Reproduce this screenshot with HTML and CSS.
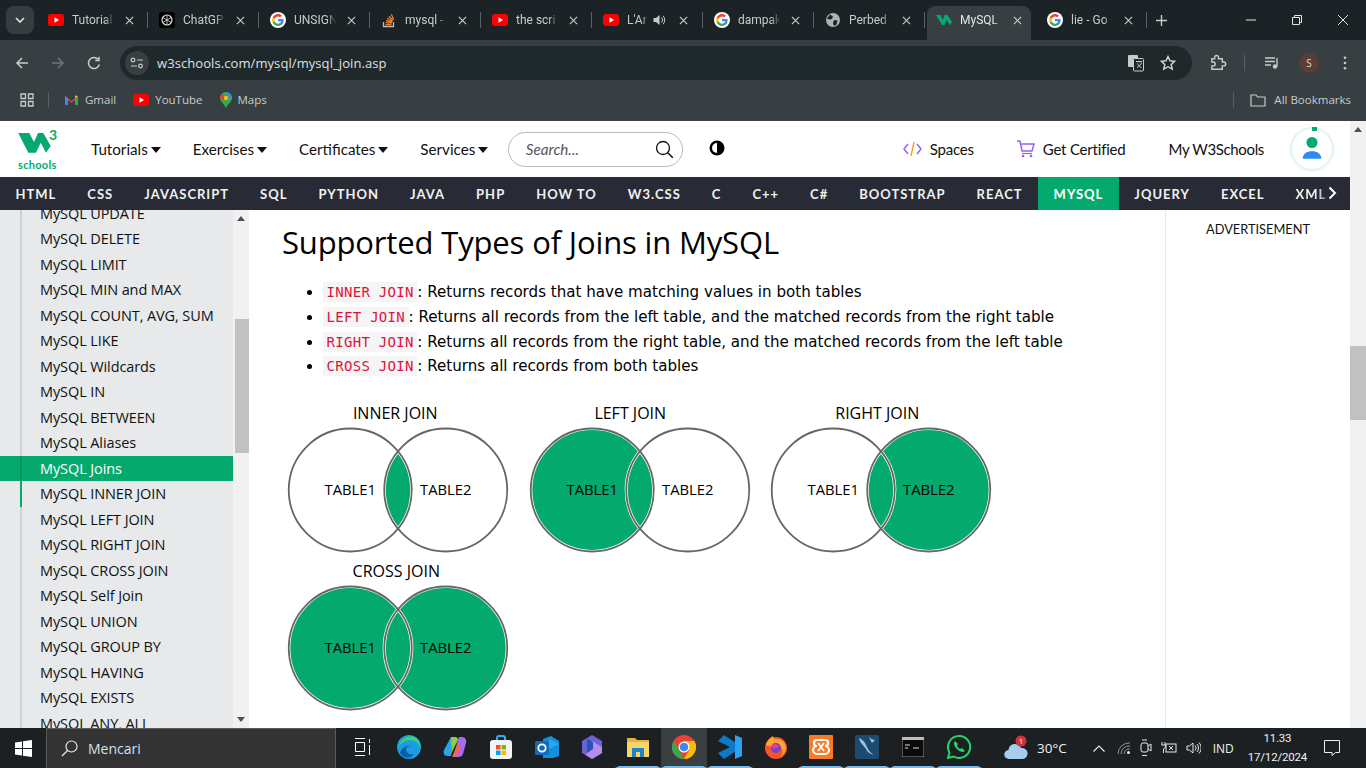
FILE: index.html
```html
<!DOCTYPE html>
<html>
  <head>
    <meta charset="UTF-8" />
    <meta name="viewport" content="width=device-width, initial-scale=1.0" />
    <title>MySQL Joins</title>
    <link rel="stylesheet" href="styles.css">
  </head>
  <body>
    <svg class="defs" aria-hidden="true">
      <symbol id="i-g" viewBox="0 0 16 16">
        <circle cx="8" cy="8" r="8" fill="#fff"/>
        <path d="M13.600 8.200c0-.4 0-.8-.1-1.200H8v2.300h3.200c-.1.800-.6 1.400-1.200 1.800v1.500h1.900c1.100-1 1.700-2.500 1.700-4.400z" fill="#4285f4"/>
        <path d="M8 14c1.600 0 2.900-.5 3.900-1.400L10 11.100c-.5.400-1.200.6-2 .6-1.500 0-2.800-1-3.300-2.400H2.800v1.500C3.800 12.700 5.700 14 8 14z" fill="#34a853"/>
        <path d="M4.700 9.300c-.3-.8-.3-1.800 0-2.600V5.200H2.800c-.8 1.700-.8 3.900 0 5.600z" fill="#fbbc05"/>
        <path d="M8 4.400c.9 0 1.600.3 2.200.9l1.700-1.700C10.900 2.600 9.500 2 8 2 5.700 2 3.800 3.300 2.800 5.200l1.900 1.500C5.200 5.400 6.500 4.400 8 4.400z" fill="#ea4335"/>
      </symbol>
      <symbol id="i-yt" viewBox="0 0 16 16">
        <rect y="2" width="16" height="12" rx="3" fill="#f00"/>
        <path d="M6.500 5.300v5.400L11 8z" fill="#fff"/>
      </symbol>
      <symbol id="i-x" viewBox="0 0 10 10">
        <path d="M1 1l8 8M9 1l-8 8" stroke="#c7cbcd" stroke-width="1.300" fill="none"/>
      </symbol>
    </svg>

    <div class="tabstrip">
      <button class="tab-menu">
        <svg width="10" height="6" viewBox="0 0 10 6"><path d="M1 1l4 4 4-4" stroke="#e3e5e6" stroke-width="1.600" fill="none"/></svg>
      </button>
      <div class="tab"><svg class="fav"><use href="#i-yt"/></svg><span class="tab-name">Tutorial</span><svg class="tab-x"><use href="#i-x"/></svg></div>
      <div class="tab">
        <svg class="fav" viewBox="0 0 16 16"><rect width="16" height="16" rx="3" fill="#000"/><circle cx="8" cy="8" r="5" fill="none" stroke="#ddd" stroke-width="1.200"/><path d="M8 3v10M3.700 5.500l8.600 5M12.300 5.500l-8.600 5" stroke="#ddd" stroke-width=".8"/></svg>
        <span class="tab-name">ChatGP</span><svg class="tab-x"><use href="#i-x"/></svg>
      </div>
      <div class="tab"><svg class="fav"><use href="#i-g"/></svg><span class="tab-name">UNSIGN</span><svg class="tab-x"><use href="#i-x"/></svg></div>
      <div class="tab">
        <svg class="fav" viewBox="0 0 16 16"><path d="M2.500 10v4.500h10V10" fill="none" stroke="#bcbbbb" stroke-width="1.300"/><path d="M4.500 12.700h6M4.700 10.600l6 .6M5.200 8.500l5.800 1.600M6.200 6.300l5.200 3M8 4.200l3.800 4.300M10.300 2.300l2.400 5.300" stroke="#f48024" stroke-width="1.300" fill="none"/></svg>
        <span class="tab-name">mysql -</span><svg class="tab-x"><use href="#i-x"/></svg>
      </div>
      <div class="tab"><svg class="fav"><use href="#i-yt"/></svg><span class="tab-name">the scri</span><svg class="tab-x"><use href="#i-x"/></svg></div>
      <div class="tab">
        <svg class="fav"><use href="#i-yt"/></svg><span class="tab-name tab-name-short">L'Ar</span>
        <svg class="tab-sound" viewBox="0 0 14 14"><path d="M1.500 5h2.500l3.500-3v10L4 9H1.500z" fill="#c7cbcd"/><path d="M9.500 4.500a3.500 3.500 0 0 1 0 5M11 2.800a6 6 0 0 1 0 8.400" stroke="#c7cbcd" fill="none"/></svg>
        <svg class="tab-x"><use href="#i-x"/></svg>
      </div>
      <div class="tab"><svg class="fav"><use href="#i-g"/></svg><span class="tab-name">dampak</span><svg class="tab-x"><use href="#i-x"/></svg></div>
      <div class="tab">
        <svg class="fav" viewBox="0 0 16 16"><circle cx="8" cy="8" r="7" fill="#aeb2b4"/><path d="M5 2.500l3 2-1 2.500-3 .5-2-1zM9 8l3.500.5-1 4-2.500 1.500-1-3z" fill="#1b2327"/></svg>
        <span class="tab-name">Perbed</span><svg class="tab-x"><use href="#i-x"/></svg>
      </div>
      <div class="tab tab-active">
        <svg class="fav" viewBox="0 0 16 16"><path d="M0 3h4.500l2.200 5L8.500 3h3L16 10l-2 3-3.500-5-2 5H6z" fill="#04aa6d"/></svg>
        <span class="tab-name">MySQL</span><svg class="tab-x"><use href="#i-x"/></svg>
      </div>
      <div class="tab"><svg class="fav"><use href="#i-g"/></svg><span class="tab-name">lie - Go</span><svg class="tab-x"><use href="#i-x"/></svg></div>
      <svg class="tab-new" viewBox="0 0 12 12"><path d="M6 0v12M0 6h12" stroke="#c7cbcd" stroke-width="1.500"/></svg>
      <div class="win-btns">
        <svg width="10" height="10" viewBox="0 0 10 10"><path d="M0 5h10" stroke="#e3e5e6"/></svg>
        <svg width="10" height="10" viewBox="0 0 10 10"><path d="M.5 2.500h7v7h-7zM2.500 2.500v-2h7v7h-2" stroke="#e3e5e6" fill="none"/></svg>
        <svg width="10" height="10" viewBox="0 0 10 10"><path d="M0 0l10 10M10 0L0 10" stroke="#e3e5e6"/></svg>
      </div>
    </div>

    <div class="toolbar">
      <svg class="tool-btn" viewBox="0 0 14 14"><path d="M13 7H2M7 2L2 7l5 5" stroke="#c7cbcd" stroke-width="1.500" fill="none"/></svg>
      <svg class="tool-btn" viewBox="0 0 14 14"><path d="M1 7h11M7 2l5 5-5 5" stroke="#70777a" stroke-width="1.500" fill="none"/></svg>
      <svg class="tool-btn" viewBox="0 0 14 14"><path d="M12.300 8.500A5.500 5.500 0 1 1 11 3.300M12 .8v3.700H8.300" stroke="#c7cbcd" stroke-width="1.500" fill="none"/></svg>
      <div class="omnibox">
        <span class="site-info">
          <svg width="14" height="12" viewBox="0 0 14 12"><circle cx="3" cy="3" r="1.800" fill="none" stroke="#c7cbcd" stroke-width="1.200"/><path d="M7 3h6M1 9h6" stroke="#c7cbcd" stroke-width="1.200"/><circle cx="10.500" cy="9" r="1.800" fill="none" stroke="#c7cbcd" stroke-width="1.200"/></svg>
        </span>
        <span class="url">w3schools.com/mysql/mysql_join.asp</span>
        <svg class="omni-translate" viewBox="0 0 18 18"><rect x="1" y="1" width="10" height="12" rx="1" fill="#c7cbcd"/><rect x="6.500" y="4.500" width="10" height="12.500" rx="1" fill="#1f282b" stroke="#c7cbcd"/><path d="M9 7.500h6M12 7v1.500M10 13.500c2.500-1 4-3 4.500-5M10.500 9.500c1 2 2.500 3.500 4 4" stroke="#c7cbcd" fill="none"/></svg>
        <svg class="omni-star" viewBox="0 0 16 16"><path d="M8 1.500l2 4.300 4.700.5-3.500 3.200 1 4.600L8 11.700l-4.200 2.400 1-4.600L1.300 6.300 6 5.800z" fill="none" stroke="#d4d7d8" stroke-width="1.400"/></svg>
      </div>
      <svg class="ext" viewBox="0 0 18 18"><path d="M3 5h3V3.500a2 2 0 0 1 4 0V5h4v3.500h1.500a2 2 0 0 1 0 4H14V16H3v-3.500h1.500a2 2 0 0 0 0-4H3z" fill="none" stroke="#c7cbcd" stroke-width="1.500" transform="scale(.95)"/></svg>
      <span class="tool-sep"></span>
      <svg class="media" viewBox="0 0 16 14"><path d="M1 2h10M1 5.500h10M1 9h6" stroke="#c7cbcd" stroke-width="1.400"/><path d="M13 2v8.500" stroke="#c7cbcd" stroke-width="1.400"/><circle cx="11" cy="10.500" r="2.200" fill="#c7cbcd"/></svg>
      <span class="profile">S</span>
      <svg class="dots" viewBox="0 0 4 16"><circle cx="2" cy="2" r="1.500" fill="#c7cbcd"/><circle cx="2" cy="8" r="1.500" fill="#c7cbcd"/><circle cx="2" cy="14" r="1.500" fill="#c7cbcd"/></svg>
    </div>

    <div class="bookmarks">
      <svg class="apps" viewBox="0 0 14 14"><path d="M1 1h4.500v4.500H1zM8.500 1H13v4.500H8.500zM1 8.500h4.500V13H1zM8.500 8.500H13V13H8.500z" fill="none" stroke="#c7cbcd" stroke-width="1.300"/></svg>
      <span class="bm-sep"></span>
      <span class="bm">
        <svg width="15" height="12" viewBox="0 0 15 12"><path d="M1 11V2l6.500 5L14 2v9h-3V6L7.500 8.700 4 6v5z" fill="#ea4335"/><path d="M1 11V2l3 2.300V11z" fill="#4285f4"/><path d="M14 11V2l-3 2.300V11z" fill="#34a853"/><path d="M14 2l-3 2.300V1.500z" fill="#fbbc05"/></svg>
        Gmail
      </span>
      <span class="bm"><svg width="16" height="16"><use href="#i-yt"/></svg>YouTube</span>
      <span class="bm">
        <svg width="12" height="16" viewBox="0 0 12 16"><path d="M6 0a6 6 0 0 1 6 6c0 3.500-4 6-6 10C4 12 0 9.500 0 6a6 6 0 0 1 6-6z" fill="#34a853"/><path d="M6 0a6 6 0 0 1 6 6L9 7V4z" fill="#4285f4"/><path d="M1.500 2L6 5 3 8 0 6.500z" fill="#ea4335"/><circle cx="6" cy="6" r="2.200" fill="#fbbc05"/></svg>
        Maps
      </span>
      <span class="bm-all">
        <span class="bm-sep"></span>
        <svg width="16" height="14" viewBox="0 0 16 14"><path d="M1 2h5l1.500 2H15v9H1z" fill="none" stroke="#c7cbcd" stroke-width="1.200"/></svg>
        All Bookmarks
      </span>
    </div>

    <div class="page">
      <div class="site">
        <header class="topbar">
          <div class="logo">
            <svg width="36" height="28" viewBox="0 0 36 28"><path d="M.3 3h11L16 12l4-9h5.300l7.400 13L28 22.700l-5.300-10-4.700 10h-7.700z" fill="#04aa6d"/></svg>
            <span class="logo-three">3</span>
            <span class="logo-name">schools</span>
          </div>
          <a class="top-link">Tutorials<i class="caret"></i></a>
          <a class="top-link">Exercises<i class="caret"></i></a>
          <a class="top-link">Certificates<i class="caret"></i></a>
          <a class="top-link">Services<i class="caret"></i></a>
          <div class="search">
            <span>Search...</span>
            <svg width="19" height="19" viewBox="0 0 19 19"><circle cx="8" cy="8" r="6.500" fill="none" stroke="#111" stroke-width="1.300"/><path d="M12.800 12.800l5 5" stroke="#111" stroke-width="1.500"/></svg>
          </div>
          <svg class="contrast" width="16" height="16" viewBox="0 0 16 16"><circle cx="8" cy="8" r="7.500" fill="#000"/><path d="M8 3a5 5 0 0 0 0 10z" fill="#fff"/></svg>
          <div class="top-right">
            <a class="top-item">
              <svg width="19" height="14" viewBox="0 0 19 14"><path d="M5 2L1 7l4 5M14 2l4 5-4 5" stroke="#9763f6" stroke-width="1.500" fill="none"/><path d="M11 0L8 14" stroke="#f5a623" stroke-width="1.500"/></svg>
              Spaces
            </a>
            <a class="top-item">
              <svg width="18" height="18" viewBox="0 0 18 18"><path d="M0 1h3l2 10h10l2-7H4" stroke="#9763f6" stroke-width="1.500" fill="none"/><path d="M5 13.500h10" stroke="#9763f6" stroke-width="1.200"/><circle cx="6" cy="16" r="1.300" fill="#9763f6"/><circle cx="14" cy="16" r="1.300" fill="#9763f6"/></svg>
              Get Certified
            </a>
            <a class="top-item">My W3Schools</a>
            <svg class="avatar" width="46" height="46" viewBox="0 0 46 46">
              <circle cx="23" cy="23" r="21" fill="#fff" stroke="#e6f5ef" stroke-width="2.600"/>
              <rect x="23" y="1" width="5" height="4" fill="#04aa6d"/>
              <circle cx="23" cy="16.500" r="5.500" fill="#04aa6d"/>
              <path d="M13.700 32.700c0-5 4-7.500 9.300-7.500s9.300 2.500 9.300 7.500z" fill="#2d8cf0"/>
            </svg>
          </div>
        </header>

        <nav class="subnav">
          <a>HTML</a><a>CSS</a><a>JAVASCRIPT</a><a>SQL</a><a>PYTHON</a><a>JAVA</a><a>PHP</a><a>HOW TO</a><a>W3.CSS</a><a>C</a><a>C++</a><a>C#</a><a>BOOTSTRAP</a><a>REACT</a><a class="active">MYSQL</a><a>JQUERY</a><a>EXCEL</a><a class="fade">XML</a>
          <svg class="subnav-more" width="9" height="14" viewBox="0 0 9 14"><path d="M1.500 1.500L7 7l-5.500 5.500" stroke="#fff" stroke-width="2" fill="none"/></svg>
        </nav>

        <div class="body-row">
          <aside class="sidebar">
            <ul class="side-list">
              <li>MySQL UPDATE</li>
              <li>MySQL DELETE</li>
              <li>MySQL LIMIT</li>
              <li>MySQL MIN and MAX</li>
              <li>MySQL COUNT, AVG, SUM</li>
              <li>MySQL LIKE</li>
              <li>MySQL Wildcards</li>
              <li>MySQL IN</li>
              <li>MySQL BETWEEN</li>
              <li>MySQL Aliases</li>
              <li class="current">MySQL Joins</li>
              <li class="sub-current">MySQL INNER JOIN</li>
              <li>MySQL LEFT JOIN</li>
              <li>MySQL RIGHT JOIN</li>
              <li>MySQL CROSS JOIN</li>
              <li>MySQL Self Join</li>
              <li>MySQL UNION</li>
              <li>MySQL GROUP BY</li>
              <li>MySQL HAVING</li>
              <li>MySQL EXISTS</li>
              <li>MySQL ANY, ALL</li>
            </ul>
          </aside>
          <div class="side-scroll">
            <i class="arrow-up"></i>
            <span class="side-thumb"></span>
            <i class="arrow-down"></i>
          </div>

          <main class="content">
            <h1>Supported Types of Joins in MySQL</h1>
            <ul class="join-list">
              <li><code>INNER JOIN</code>: Returns records that have matching values in both tables</li>
              <li><code>LEFT JOIN</code>: Returns all records from the left table, and the matched records from the right table</li>
              <li><code>RIGHT JOIN</code>: Returns all records from the right table, and the matched records from the left table</li>
              <li><code>CROSS JOIN</code>: Returns all records from both tables</li>
            </ul>
            <div class="venns">
              <svg class="venn" viewBox="0 0 241 158">
                <text x="107" y="19" class="venn-title">INNER JOIN</text>
                <path d="M109.750 51.200A61.500 61.500 0 0 1 109.750 128.800A61.500 61.500 0 0 1 109.750 51.200z" class="fill"/>
                <circle cx="62" cy="90" r="61.500" class="halo"/><circle cx="157.500" cy="90" r="61.500" class="halo"/>
                <circle cx="62" cy="90" r="61.500" class="ring"/><circle cx="157.500" cy="90" r="61.500" class="ring"/>
                <text x="62" y="95">TABLE1</text><text x="157.500" y="95">TABLE2</text>
              </svg>
              <svg class="venn" viewBox="0 0 241 158">
                <text x="100" y="19" class="venn-title">LEFT JOIN</text>
                <circle cx="62" cy="90" r="61.500" class="fill"/>
                <circle cx="62" cy="90" r="61.500" class="halo"/><circle cx="157.500" cy="90" r="61.500" class="halo"/>
                <circle cx="62" cy="90" r="61.500" class="ring"/><circle cx="157.500" cy="90" r="61.500" class="ring"/>
                <text x="62" y="95">TABLE1</text><text x="157.500" y="95">TABLE2</text>
              </svg>
              <svg class="venn" viewBox="0 0 241 158">
                <text x="106" y="19" class="venn-title">RIGHT JOIN</text>
                <circle cx="157.500" cy="90" r="61.500" class="fill"/>
                <circle cx="62" cy="90" r="61.500" class="halo"/><circle cx="157.500" cy="90" r="61.500" class="halo"/>
                <circle cx="62" cy="90" r="61.500" class="ring"/><circle cx="157.500" cy="90" r="61.500" class="ring"/>
                <text x="62" y="95">TABLE1</text><text x="157.500" y="95">TABLE2</text>
              </svg>
              <svg class="venn" viewBox="0 0 241 158">
                <text x="108" y="19" class="venn-title">CROSS JOIN</text>
                <circle cx="62" cy="90" r="61.500" class="fill"/><circle cx="157.500" cy="90" r="61.500" class="fill"/>
                <circle cx="62" cy="90" r="61.500" class="halo"/><circle cx="157.500" cy="90" r="61.500" class="halo"/>
                <circle cx="62" cy="90" r="61.500" class="ring"/><circle cx="157.500" cy="90" r="61.500" class="ring"/>
                <text x="62" y="95">TABLE1</text><text x="157.500" y="95">TABLE2</text>
              </svg>
            </div>
          </main>

          <aside class="ads">ADVERTISEMENT</aside>
        </div>
      </div>

      <div class="page-scroll">
        <i class="arrow-up"></i>
        <span class="page-thumb"></span>
      </div>
    </div>

    <footer class="taskbar">
      <div class="start">
        <svg width="17" height="17" viewBox="0 0 17 17"><path d="M0 2.500l7-1v6.500H0zM8 1.300L17 0v8H8zM0 9h7v6.500l-7-1zM8 9h9v8l-9-1.300z" fill="#fff"/></svg>
      </div>
      <div class="task-search">
        <svg width="17" height="17" viewBox="0 0 17 17"><circle cx="10.500" cy="6.500" r="5.500" fill="none" stroke="#e8e8e8" stroke-width="1.200"/><path d="M6.500 10.500L1 16" stroke="#e8e8e8" stroke-width="1.300"/></svg>
        <span>Mencari</span>
      </div>
      <div class="task-icons">
        <span class="task-ic task-view"><svg width="16" height="18" viewBox="0 0 16 18"><path d="M0 .5h10M0 17.500h10M.5 4.500h9v9h-9zM14.500 1v4M14.500 7v10" stroke="#fff" fill="none"/></svg></span>
        <span class="task-ic"><svg width="24" height="24" viewBox="0 0 24 24"><circle cx="12" cy="12" r="12" fill="#1b9de2"/><path d="M23.500 14C23 9 19 5 13 5 7 5 2.500 9 1 13 3 4 12-2 19 3c4 3 5 7 4.500 11z" fill="#3fd070"/><path d="M9 14c0 4 4 6 8 5-3 5-11 5-14-1 2-6 7-8 11-7-3 0-5 1-5 3z" fill="#0d5ea8"/></svg></span>
        <span class="task-ic"><svg width="24" height="24" viewBox="0 0 24 24"><path d="M8 2h5l-5 19H4C1 21 0 18 1 15z" fill="#2ba3e8"/><path d="M8 2h4c2 0 3 1 3 3l-6 12z" fill="#8fcf3f"/><path d="M16 2h3c3 0 5 3 4 6l-3 11c-1 2-2 3-5 3h-5z" fill="#a86bf0"/><path d="M9 22l5-12c1-2 3-1 3 1l-2 8c-1 2-3 3-6 3z" fill="#f2674a"/></svg></span>
        <span class="task-ic"><svg width="22" height="24" viewBox="0 0 22 24"><path d="M7 6V3a2 2 0 0 1 2-2h4a2 2 0 0 1 2 2v3" fill="none" stroke="#2bb0e8" stroke-width="2"/><rect y="5" width="22" height="19" rx="3" fill="#f4f4f4"/><rect x="6" y="10" width="4.500" height="4.500" fill="#f25022"/><rect x="11.500" y="10" width="4.500" height="4.500" fill="#7fba00"/><rect x="6" y="15.500" width="4.500" height="4.500" fill="#00a4ef"/><rect x="11.500" y="15.500" width="4.500" height="4.500" fill="#ffb900"/></svg></span>
        <span class="task-ic"><svg width="24" height="24" viewBox="0 0 24 24"><path d="M8 4l8-3 8 5v15l-6 2H8z" fill="#1490df"/><path d="M14 4l10 5-10 5z" fill="#28a8ea"/><rect y="6" width="14" height="14" rx="1.500" fill="#0f6cbd"/><circle cx="7" cy="13" r="3.700" fill="none" stroke="#fff" stroke-width="1.800"/></svg></span>
        <span class="task-ic"><svg width="20" height="24" viewBox="0 0 20 24"><path d="M10 0l10 6v12l-10 6L0 18V6z" fill="#6b62d6"/><path d="M10 6l10 6v6l-10 6-6-4z" fill="#b38de8"/><path d="M5 4l6 3v7l-6 4z" fill="#2c4fb5"/></svg></span>
        <span class="task-ic"><svg width="22" height="22" viewBox="0 0 22 22"><path d="M0 2h8l2 2h12v4H0z" fill="#e9b338"/><path d="M0 6h22v15H0z" fill="#f7d56a"/><rect x="5" y="12" width="12" height="9" fill="#1e86c8"/><rect x="9" y="16" width="4" height="5" fill="#f7d56a"/></svg></span>
        <span class="task-ic task-on"><svg width="24" height="24" viewBox="0 0 24 24"><circle cx="12" cy="12" r="12" fill="#ea4335"/><path d="M12 24a12 12 0 0 1-10.400-18L7 15z" fill="#34a853"/><path d="M12 6h10.400A12 12 0 0 1 12 24l5.200-9z" fill="#fbbc05"/><circle cx="12" cy="12" r="5.500" fill="#fff"/><circle cx="12" cy="12" r="4.300" fill="#4285f4"/></svg></span>
        <span class="task-ic"><svg width="24" height="24" viewBox="0 0 24 24"><path d="M18 0l6 6-12 6 12 6-6 6L0 12z" fill="#0d79cb" transform="matrix(-1 0 0 1 24 0)"/><path d="M17 0l7 3v18l-7 3z" fill="#2aa4f0"/></svg></span>
        <span class="task-ic no-run"><svg width="24" height="24" viewBox="0 0 24 24"><circle cx="12" cy="13" r="11" fill="#f5552d"/><path d="M2 10C3 5 6 3 9 1c0 2 1 3 3 3 4 0 7 1 9 5 2 5 0 10-5 13 4-4 3-9-1-11-3-1-6 0-8 1z" fill="#ffa52e"/><circle cx="12" cy="13" r="5" fill="#7643c9"/><path d="M8 9c2-1 6 0 7 3-3 0-4 1-5 2-2-1-3-3-2-5z" fill="#ea3f9a"/></svg></span>
        <span class="task-ic"><svg width="24" height="24" viewBox="0 0 24 24"><rect width="24" height="24" rx="1" fill="#fb7a24"/><path d="M8 5h8a3 3 0 0 1 0 6 3 3 0 0 1 0 8H8a3 3 0 0 1 0-8 3 3 0 0 1 0-6z" fill="none" stroke="#fff" stroke-width="2.200"/><path d="M9 8l6 8M15 8l-6 8" stroke="#fff" stroke-width="1.800"/></svg></span>
        <span class="task-ic"><svg width="24" height="24" viewBox="0 0 24 24"><rect width="24" height="24" rx="2" fill="#1c4a73"/><path d="M4 3c3 1 5 3 7 7s3 7 8 10c-4-1-7-3-8-6-2-3-6-6-7-11zM14 2c2 2 4 3 6 3l-3 3z" fill="#9fc3d9"/></svg></span>
        <span class="task-ic"><svg width="22" height="20" viewBox="0 0 22 20"><rect width="22" height="20" fill="#0b0b0b" stroke="#999"/><rect width="22" height="3" fill="#bdbdbd"/><path d="M3 8h5M3 11h3M11 11h6" stroke="#ddd"/></svg></span>
        <span class="task-ic"><svg width="24" height="24" viewBox="0 0 24 24"><path d="M12 1a11 11 0 0 0-9.500 16.500L1 23l5.600-1.500A11 11 0 1 0 12 1z" fill="none" stroke="#25d366" stroke-width="2"/><path d="M8 6c-2 2-1 5 2 8s6 4 8 2l-3-3-2 1c-1-.5-2-1.500-3-3l1-2z" fill="#25d366"/></svg></span>
      </div>
      <div class="tray">
        <span class="weather">
          <svg width="26" height="26" viewBox="0 0 26 26"><path d="M5 24a4.500 4.500 0 0 1-.5-9 6.500 6.500 0 0 1 12.500-2 5.500 5.500 0 0 1 2 11z" fill="#a8ccee"/><circle cx="17" cy="6" r="5.500" fill="#d13438"/><text x="17" y="9" class="weather-count">1</text></svg>
          30°C
        </span>
        <svg class="tray-ic tray-up" width="12" height="7" viewBox="0 0 12 7"><path d="M.5 6.500L6 1l5.500 5.500" stroke="#e8e8e8" stroke-width="1.200" fill="none"/></svg>
        <svg class="tray-ic" width="14" height="14" viewBox="0 0 14 14"><path d="M1 13A11 11 0 0 1 13 2M4 13a8 8 0 0 1 9-8M7 13a5 5 0 0 1 6-5" stroke="#8e9294" fill="none"/><circle cx="11.500" cy="11.500" r="1.500" fill="#eee"/></svg>
        <svg class="tray-ic" width="12" height="18" viewBox="0 0 12 18"><rect x="1" y="4" width="7" height="9" rx="2" fill="none" stroke="#e8e8e8"/><path d="M8 7l3-2v7l-3-2M2 1h5M2 16.500h5" stroke="#e8e8e8" fill="none"/></svg>
        <svg class="tray-ic" width="16" height="14" viewBox="0 0 16 14"><rect x="5" y="3" width="10" height="8" fill="none" stroke="#e8e8e8"/><path d="M1 1v3M4 1v3M.5 4h4v2L2.500 8v4M8 5l4 4M12 5L8 9" stroke="#e8e8e8" fill="none"/></svg>
        <svg class="tray-ic" width="15" height="14" viewBox="0 0 15 14"><path d="M1 5h2.500L7 2v10L3.500 9H1z" fill="none" stroke="#e8e8e8"/><path d="M9 4.500a3.500 3.500 0 0 1 0 5M11 3a6 6 0 0 1 0 8M13 1.500a8 8 0 0 1 0 11" stroke="#e8e8e8" fill="none"/></svg>
        <span class="lang">IND</span>
        <span class="clock"><span>11.33</span><span>17/12/2024</span></span>
        <svg class="notif" width="16" height="16" viewBox="0 0 16 16"><path d="M.5.5h15v12h-4l-3.500 3v-3H.5z" fill="none" stroke="#f0f0f0"/></svg>
      </div>
    </footer>
  </body>
</html>
```

FILE: styles.css
```css
* {
  box-sizing: border-box;
  margin: 0;
  padding: 0;
}

html,
body {
  height: 768px;
  overflow: hidden;
}

body {
  display: flex;
  flex-direction: column;
  font-family: "Open Sans", sans-serif;
  background-color: #fff;
  color: #000;
}

.defs {
  display: none;
}

/* browser */
.tabstrip {
  height: 40px;
  display: flex;
  align-items: center;
  background-color: #1b2327;
  padding-left: 6px;
  color: #c7cbcd;
  font-family: Roboto, sans-serif;
  font-size: 12px;
}

.tab-menu {
  width: 28px;
  height: 28px;
  margin-right: 3px;
  border: none;
  border-radius: 8px;
  background-color: #363d40;
  display: flex;
  align-items: center;
  justify-content: center;
}

.tab {
  position: relative;
  width: 111px;
  height: 34px;
  margin-top: 6px;
  padding-left: 11px;
  padding-bottom: 6px;
  display: flex;
  align-items: center;
  flex-shrink: 0;
}

.tab::after {
  content: "";
  position: absolute;
  right: 0;
  top: 6px;
  height: 16px;
  width: 1px;
  background-color: #5a6063;
}

.tab-active {
  z-index: 1;
  color: #e3e5e6;
}

.tab-active::before {
  content: "";
  position: absolute;
  left: 2px;
  right: 5px;
  top: 0;
  bottom: 0;
  background-color: #383f42;
  border-radius: 8px 8px 0 0;
}

.tab-active::after {
  display: none;
}

.fav {
  position: relative;
  width: 16px;
  height: 16px;
  flex-shrink: 0;
}

.tab-name {
  position: relative;
  width: 42px;
  margin-left: 8px;
  white-space: nowrap;
  overflow: hidden;
  -webkit-mask-image: linear-gradient(to right, #000 78%, transparent);
  mask-image: linear-gradient(to right, #000 78%, transparent);
}

.tab-name-short {
  width: 20px;
  flex-shrink: 0;
}

.tab-sound {
  width: 14px;
  height: 14px;
  margin-left: 5px;
  margin-right: 2px;
}

.tab-x {
  position: relative;
  width: 9px;
  height: 9px;
  margin-left: 11px;
  flex-shrink: 0;
}

.tab-new {
  width: 11px;
  height: 11px;
  margin-left: 9px;
}

.win-btns {
  margin-left: auto;
  display: flex;
  align-items: center;
  gap: 36px;
  padding-right: 18px;
}

.toolbar {
  height: 45px;
  display: flex;
  align-items: center;
  background-color: #383f42;
  padding-bottom: 5px;
  padding-top: 6px;
}

.tool-btn {
  width: 14px;
  height: 14px;
  margin-left: 22px;
}

.tool-btn:first-child {
  margin-left: 15px;
}

.omnibox {
  width: 1072px;
  height: 34px;
  margin-left: 19px;
  background-color: #1f282b;
  border-radius: 17px;
  display: flex;
  align-items: center;
  padding-left: 5px;
  padding-right: 16px;
  color: #dfe1e2;
  font-size: 13px;
  letter-spacing: .08px;
}

.site-info {
  width: 24px;
  height: 24px;
  border-radius: 50%;
  background-color: #383f42;
  display: flex;
  align-items: center;
  justify-content: center;
}

.url {
  margin-left: 8px;
  flex: 1;
}

.omni-translate {
  width: 18px;
  height: 18px;
}

.omni-star {
  width: 16px;
  height: 16px;
  margin-left: 15px;
}

.ext {
  width: 18px;
  height: 18px;
  margin-left: 17px;
}

.tool-sep {
  width: 1px;
  height: 16px;
  margin-left: 17px;
  background-color: #5a6063;
}

.media {
  width: 16px;
  height: 14px;
  margin-left: 19px;
}

.profile {
  width: 20px;
  height: 20px;
  margin-left: 19px;
  border-radius: 50%;
  background-color: #5a3d33;
  color: #e3d9d5;
  font-size: 10px;
  display: flex;
  align-items: center;
  justify-content: center;
}

.dots {
  width: 4px;
  height: 14px;
  margin-left: 24px;
}

.bookmarks {
  height: 35px;
  display: flex;
  align-items: center;
  background-color: #383f42;
  color: #c7cbcd;
  font-size: 11.500px;
  padding-left: 20px;
  padding-bottom: 6px;
}

.apps {
  width: 14px;
  height: 14px;
}

.bm-sep {
  width: 1px;
  height: 16px;
  background-color: #5a6063;
  margin-left: 14px;
  margin-right: 15px;
}

.bm {
  display: flex;
  align-items: center;
  gap: 6px;
  margin-right: 17px;
}

.bm-all {
  margin-left: auto;
  display: flex;
  align-items: center;
  padding-right: 15px;
  gap: 8px;
}

.bm-all .bm-sep {
  margin: 0 8px 0 0;
}

/* w3schools page */
.page {
  height: 608px;
  display: flex;
  border-top: 1px solid #3c3f41;
}

.site {
  width: 1350px;
  display: flex;
  flex-direction: column;
}

.page-scroll {
  width: 16px;
  background-color: #f1f1f1;
  position: relative;
}

.page-thumb {
  display: block;
  height: 74px;
  margin-top: 225px;
  background-color: #c1c1c1;
}

.arrow-up,
.arrow-down {
  position: absolute;
  left: 4px;
  border-left: 4px solid transparent;
  border-right: 4px solid transparent;
}

.arrow-up {
  top: 6px;
  border-bottom: 5px solid #505050;
}

.arrow-down {
  bottom: 6px;
  border-top: 5px solid #505050;
}

.topbar {
  height: 56px;
  display: flex;
  align-items: center;
  padding-left: 18px;
  padding-right: 15px;
  font-family: Lato, sans-serif;
  font-size: 15.200px;
  color: #111;
}

.logo {
  position: relative;
  width: 40px;
  height: 46px;
  margin-right: 33px;
  color: #04aa6d;
}

.logo svg {
  display: block;
  margin-top: 4px;
}

.logo-three {
  position: absolute;
  right: 1px;
  top: 0;
  font-size: 14px;
  font-weight: 700;
}

.logo-name {
  position: absolute;
  left: 0;
  bottom: 1px;
  font-size: 11px;
  font-weight: 700;
  letter-spacing: .3px;
}

.top-link {
  display: flex;
  align-items: center;
  margin-right: 32px;
}

.caret {
  margin-left: 3px;
  margin-top: 1px;
  border-left: 5px solid transparent;
  border-right: 5px solid transparent;
  border-top: 6px solid #111;
}

.search {
  width: 175px;
  height: 35px;
  margin-left: -12.500px;
  border: 1px solid #bbb;
  border-radius: 18px;
  display: flex;
  align-items: center;
  justify-content: space-between;
  padding: 0 8px 0 17px;
  font-style: italic;
  color: #555;
}

.contrast {
  margin-left: 26px;
  margin-top: -3px;
}

.top-right {
  margin-left: auto;
  display: flex;
  align-items: center;
}

.top-item {
  display: flex;
  align-items: center;
  gap: 8px;
  margin-right: 43px;
  font-size: 15px;
  letter-spacing: -.2px;
}

.top-item:nth-child(2) {
  margin-right: 43px;
}

.top-item:nth-child(3) {
  margin-right: 25px;
  letter-spacing: -.35px;
}

.subnav {
  height: 33px;
  display: flex;
  align-items: stretch;
  background-color: #282a35;
  color: #f1f1f1;
  font-family: Lato, sans-serif;
  font-size: 13px;
  font-weight: 700;
  letter-spacing: 1px;
  position: relative;
  overflow: hidden;
}

.subnav a {
  display: flex;
  align-items: center;
  padding: 0 15.500px;
  white-space: nowrap;
  flex-shrink: 0;
}

.subnav .active {
  background-color: #04aa6d;
  color: #fff;
}

.subnav .fade {
  -webkit-mask-image: linear-gradient(to right, #000 60%, transparent 85%);
  mask-image: linear-gradient(to right, #000 60%, transparent 85%);
}

.subnav-more {
  position: absolute;
  right: 13px;
  top: 9px;
}

.body-row {
  flex: 1;
  min-height: 0;
  display: flex;
}

.sidebar {
  width: 233px;
  background-color: #e7e9eb;
  overflow: hidden;
  position: relative;
}

.side-list {
  list-style: none;
  margin-top: -9.500px;
  font-size: 14.500px;
  color: #111;
}

.side-list li {
  height: 25.500px;
  line-height: 25.500px;
  padding-left: 40px;
  white-space: nowrap;
  position: relative;
  letter-spacing: -.1px;
}

.side-list li::before {
  content: "";
  position: absolute;
  left: 20px;
  top: 0;
  bottom: 0;
  width: 2px;
  background-color: #cfd1d3;
}

.side-list .current {
  background-color: #04aa6d;
  color: #fff;
}

.side-list .current::before {
  background-color: #03945f;
}

.side-list .sub-current::before {
  background-color: #04aa6d;
}

.side-scroll {
  width: 16px;
  background-color: #f1f1f1;
  position: relative;
}

.side-thumb {
  display: block;
  width: 14px;
  height: 134px;
  margin: 109px 0 0 2px;
  background-color: #c1c1c1;
}

.content {
  width: 916px;
  padding-left: 33px;
  overflow: hidden;
}

h1 {
  font-size: 31px;
  font-weight: 400;
  line-height: 40px;
  margin-top: 12px;
  letter-spacing: -.15px;
}

.join-list {
  margin-top: 18px;
  padding-left: 41px;
  font-family: "DejaVu Sans", sans-serif;
  font-size: 15.100px;
  line-height: 24.750px;
}

.join-list li {
  height: 24.750px;
}

code {
  font-family: "DejaVu Sans Mono", monospace;
  font-size: 14px;
  color: #dc143c;
  background-color: #f5f5f5;
  padding: 2px 3.500px;
  letter-spacing: .3px;
}

.venns {
  margin-top: 21px;
  display: flex;
  flex-wrap: wrap;
  width: 735px;
}

.venn {
  width: 241.500px;
  height: 158px;
  margin-left: 6px;
  margin-right: -6px;
  overflow: visible;
}

.venn text {
  font-size: 14.800px;
  text-anchor: middle;
  fill: #000;
}

.venn .venn-title {
  font-size: 16px;
}

.venn .fill {
  fill: #04aa6d;
}

.venn .ring {
  fill: none;
  stroke: #666;
  stroke-width: 1.800;
}

.venn .halo {
  fill: none;
  stroke: #fff;
  stroke-width: 3.200;
}

.ads {
  flex: 1;
  border-left: 1px solid #e7e9eb;
  padding-top: 11px;
  text-align: center;
  font-family: Lato, sans-serif;
  font-size: 12.800px;
  color: #111;
}

/* windows taskbar */
.taskbar {
  height: 40px;
  display: flex;
  align-items: stretch;
  background-color: #1c2023;
  color: #f0f0f0;
  font-size: 13px;
}

.start {
  width: 46px;
  display: flex;
  align-items: center;
  justify-content: center;
}

.task-search {
  width: 290px;
  display: flex;
  align-items: center;
  gap: 10px;
  padding-left: 14px;
  background-color: #333;
  border: 1px solid #5a5a5a;
  border-bottom: none;
  color: #cfe0ee;
  font-size: 14px;
}

.task-icons {
  display: flex;
  margin-left: 4.500px;
}

.task-ic {
  width: 45.800px;
  height: 40px;
  display: flex;
  align-items: center;
  justify-content: center;
  border-bottom: 2px solid #76b9ed;
  border-left: 4px solid #1c2023;
  border-right: 4px solid #1c2023;
}

.task-ic:nth-child(-n+6),
.task-ic.no-run {
  border-bottom-color: transparent;
}

.task-on {
  background-color: #3a3f42;
  border-left-color: #3a3f42;
  border-right-color: #3a3f42;
}

.tray {
  margin-left: auto;
  display: flex;
  align-items: center;
  padding-right: 26px;
}

.weather {
  display: flex;
  align-items: center;
  gap: 7px;
  margin-right: 26px;
  font-size: 13.500px;
}

.weather-count {
  font-size: 8px;
  text-anchor: middle;
  fill: #fff;
}

.tray-ic {
  margin-right: 9px;
}

.tray-up {
  margin-right: 12px;
}

.lang {
  margin-left: 3px;
  font-size: 12px;
}

.clock {
  display: flex;
  flex-direction: column;
  align-items: center;
  margin-left: 14px;
  font-family: Roboto, sans-serif;
  font-size: 11.500px;
  letter-spacing: -.2px;
  line-height: 19px;
}

.notif {
  margin-left: 17px;
}
```
